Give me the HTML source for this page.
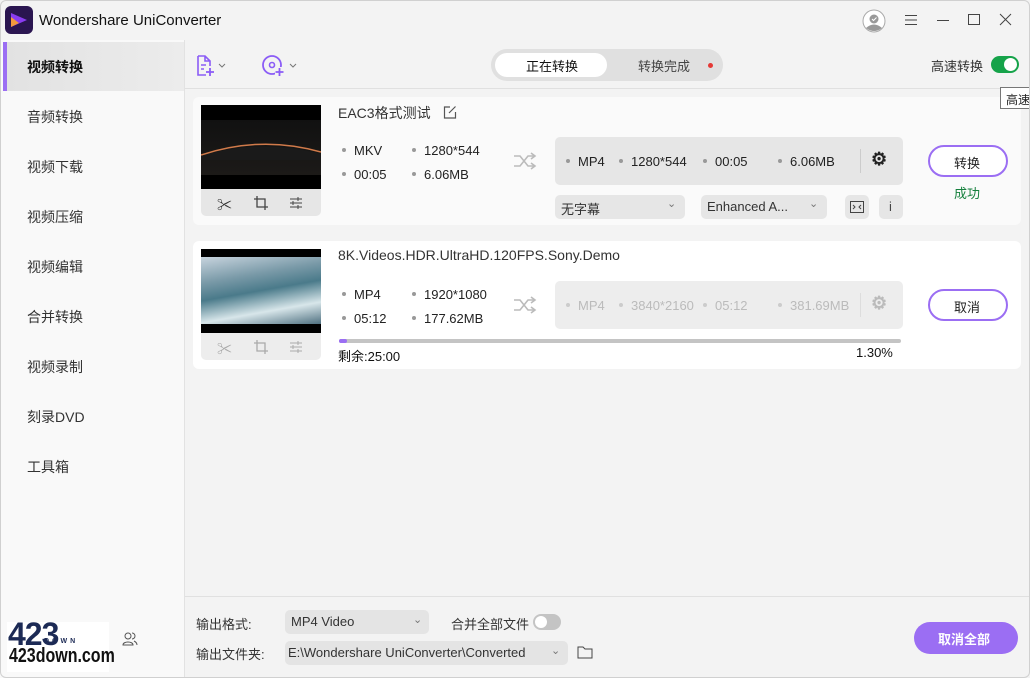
<!DOCTYPE html>
<html><head><meta charset="utf-8"><style>
*{margin:0;padding:0;box-sizing:border-box}
body{width:1030px;height:678px;overflow:hidden;background:#f3f3f3;font-family:"Liberation Sans","Noto Sans CJK SC",sans-serif;font-size:13px;color:#222;position:relative}
.a{position:absolute}
.t{position:absolute;white-space:nowrap}
.dot{display:inline-block;width:4px;height:4px;border-radius:50%;background:#999;vertical-align:middle;margin-right:8px;position:relative;top:-2px}
.side div.item{position:absolute;left:27px;font-size:14px;color:#333}
.gray{background:#e6e6e6;border-radius:5px}
</style></head><body>
<div class="a" style="left:0;top:0;width:1030px;height:678px;border:1px solid #d0d0d0;border-radius:6px;pointer-events:none;z-index:9"></div>
<div class="a" style="left:5px;top:6px;width:28px;height:28px;border-radius:6px;background:#2a1550"></div>
<svg class="a" style="left:9px;top:11px" width="20" height="18"><path d="M2 2 L18 9 L2 16Z" fill="#8a3cf0"/><path d="M2 6 L10 12 L2 16Z" fill="#f39a3c"/></svg>
<div class="t" style="left:39px;top:12px;font-size:15px;color:#111">Wondershare UniConverter</div>
<svg class="a" style="left:862px;top:9px" width="24" height="24"><circle cx="12" cy="12" r="11" fill="#fff" stroke="#aaa"/><circle cx="12" cy="10" r="4.5" fill="#999"/><path d="M4 19 Q12 12 20 19 Q12 25 4 19Z" fill="#999"/><path d="M10 10 l1.5 1.5 3-3" stroke="#fff" fill="none"/></svg>
<svg class="a" style="left:904px;top:14px" width="14" height="12"><path d="M1 1.5h12M1 6h12M1 10.5h12" stroke="#444"/></svg>
<svg class="a" style="left:936px;top:14px" width="14" height="12"><path d="M1 6.5h12" stroke="#444"/></svg>
<svg class="a" style="left:967px;top:13px" width="14" height="13"><rect x="1.5" y="1.5" width="11" height="10" fill="none" stroke="#444"/></svg>
<svg class="a" style="left:999px;top:13px" width="13" height="13"><path d="M1 1l11 11M12 1L1 12" stroke="#444"/></svg>
<div class="a side" style="left:0;top:40px;width:185px;height:638px;background:#f9f9f9;border-right:1px solid #e2e2e2">
<div class="a" style="left:3px;top:2px;width:181px;height:49px;background:linear-gradient(90deg,#e2e2e2,#ececec)"></div>
<div class="a" style="left:3px;top:2px;width:4px;height:49px;background:#9b6ef3"></div>
<div class="item" style="top:17px;font-weight:bold;color:#111">视频转换</div>
<div class="item" style="top:67px">音频转换</div>
<div class="item" style="top:117px">视频下载</div>
<div class="item" style="top:167px">视频压缩</div>
<div class="item" style="top:217px">视频编辑</div>
<div class="item" style="top:267px">合并转换</div>
<div class="item" style="top:317px">视频录制</div>
<div class="item" style="top:367px">刻录DVD</div>
<div class="item" style="top:417px">工具箱</div>
<div class="a" style="left:7px;top:582px;width:102px;height:50px;background:#fff"></div>
<div class="t" style="left:8px;top:576px;font-size:32px;font-weight:900;color:#1c2a55;letter-spacing:-1px">423</div>
<div class="t" style="left:44px;top:598px;font-size:7px;font-weight:bold;color:#1c2a55;letter-spacing:3px">DOWN</div>
<div class="t" style="left:9px;top:605px;font-size:20px;font-weight:bold;color:#111;transform:scaleX(.8);transform-origin:left">423down.com</div>
<svg class="a" style="left:122px;top:591px" width="16" height="16"><circle cx="6" cy="5" r="3" fill="none" stroke="#555"/><path d="M1 14c0-4 10-4 10 0z M10 2a3 3 0 010 6M12 10c2 1 3 2 3 4" fill="none" stroke="#555"/></svg>
</div>
<div class="a" style="left:185px;top:88px;width:845px;height:1px;background:#e0e0e0"></div>
<svg class="a" style="left:195px;top:54px" width="36" height="24"><path d="M3 2h7l5 5v5M3 2v19h8M10 2v5h5M6 11h5M6 15h3" fill="none" stroke="#8b5cf6" stroke-width="1.6"/><path d="M15 14v8M11 18h8" stroke="#8b5cf6" stroke-width="1.8"/><path d="M24 10l3 3 3-3" fill="none" stroke="#777"/></svg>
<svg class="a" style="left:260px;top:53px" width="40" height="26"><circle cx="12" cy="12" r="9" fill="none" stroke="#8b5cf6" stroke-width="1.8"/><circle cx="12" cy="12" r="2.5" fill="none" stroke="#8b5cf6" stroke-width="1.6"/><rect x="15" y="14" width="9" height="9" fill="#f3f3f3"/><path d="M19.5 15v8M15.5 19h8" stroke="#8b5cf6" stroke-width="1.8"/><path d="M30 11l3 3 3-3" fill="none" stroke="#777"/></svg>
<div class="a" style="left:491px;top:49px;width:232px;height:32px;border-radius:16px;background:#e0e0e0"></div>
<div class="a" style="left:495px;top:53px;width:112px;height:24px;border-radius:12px;background:#fff"></div>
<div class="t" style="left:526px;top:56px;color:#111">正在转换</div>
<div class="t" style="left:638px;top:56px;color:#444">转换完成</div>
<div class="a" style="left:708px;top:63px;width:5px;height:5px;border-radius:50%;background:#e53935"></div>
<div class="t" style="left:931px;top:56px;color:#333">高速转换</div>
<div class="a" style="left:991px;top:56px;width:28px;height:17px;border-radius:9px;background:#16a34a"></div>
<div class="a" style="left:1004px;top:58px;width:13px;height:13px;border-radius:50%;background:#fff"></div>
<div class="a" style="left:1000px;top:87px;width:32px;height:22px;border:1px solid #777;background:#fff;z-index:5"><span class="t" style="left:5px;top:3px;font-size:12px">高速</span></div>
<div class="a" style="left:193px;top:97px;width:828px;height:128px;background:#fafafa;border-radius:6px"></div>
<div class="a" style="left:201px;top:105px;width:120px;height:84px;background:#000"></div>
<div class="a" style="left:201px;top:120px;width:120px;height:55px;background:linear-gradient(#111,#1c1a18)"></div>
<svg class="a" style="left:201px;top:130px" width="120" height="30"><path d="M0 25 Q60 5 120 22" stroke="#d07a4a" stroke-width="1.5" fill="none"/><path d="M0 26 Q60 8 120 24 L120 30 L0 30Z" fill="#1a1a1a"/></svg>
<div class="a gray" style="left:201px;top:189px;width:120px;height:27px;border-radius:0 0 5px 5px"></div>
<div class="t" style="left:217px;top:194px;font-size:15px;color:#333">✂</div>
<svg class="a" style="left:253px;top:195px" width="16" height="16"><path d="M4 1v11h11M1 4h11v11" fill="none" stroke="#444" stroke-width="1.3"/></svg>
<svg class="a" style="left:289px;top:196px" width="14" height="14"><path d="M1 3h12M1 7h12M1 11h12M9 1v4M4 5v4M9 9v4" stroke="#444"/></svg>
<div class="t" style="left:338px;top:103px;font-size:14px;color:#333">EAC3格式测试</div>
<svg class="a" style="left:443px;top:105px" width="14" height="14"><path d="M7 2H1.5v11h11V7M6 8l6.5-6.5" fill="none" stroke="#555" stroke-width="1.2"/></svg>
<div class="t" style="left:342px;top:143px"><span class="dot"></span>MKV</div>
<div class="t" style="left:412px;top:143px"><span class="dot"></span>1280*544</div>
<div class="t" style="left:342px;top:167px"><span class="dot"></span>00:05</div>
<div class="t" style="left:412px;top:167px"><span class="dot"></span>6.06MB</div>
<svg class="a" style="left:513px;top:152px" width="24" height="18"><path d="M1 4h6l8 10h7M1 14h6l8-10h7M18 1l4 3-4 3M18 11l4 3-4 3" fill="none" stroke="#bbb" stroke-width="1.6"/></svg>
<div class="a gray" style="left:555px;top:137px;width:348px;height:48px"></div>
<div class="t" style="left:566px;top:154px"><span class="dot"></span>MP4</div>
<div class="t" style="left:619px;top:154px"><span class="dot"></span>1280*544</div>
<div class="t" style="left:703px;top:154px"><span class="dot"></span>00:05</div>
<div class="t" style="left:778px;top:154px"><span class="dot"></span>6.06MB</div>
<div class="a" style="left:860px;top:149px;width:1px;height:24px;background:#ccc"></div>
<div class="t" style="left:871px;top:149px;font-size:18px;color:#222;font-weight:bold">⚙</div>
<div class="a gray" style="left:555px;top:195px;width:130px;height:24px"></div>
<div class="t" style="left:561px;top:199px;color:#333">无字幕</div>
<div class="t" style="left:667px;top:197px;color:#777;font-size:11px">⌄</div>
<div class="a gray" style="left:701px;top:195px;width:126px;height:24px"></div>
<div class="t" style="left:707px;top:199px;color:#333">Enhanced A...</div>
<div class="t" style="left:809px;top:197px;color:#777;font-size:11px">⌄</div>
<div class="a gray" style="left:845px;top:195px;width:24px;height:24px"></div>
<svg class="a" style="left:850px;top:200px" width="14" height="14"><rect x=".5" y="1.5" width="13" height="11" fill="none" stroke="#444"/><path d="M3 5l2 2-2 2M11 5l-2 2 2 2" fill="none" stroke="#444"/></svg>
<div class="a gray" style="left:879px;top:195px;width:24px;height:24px"></div>
<div class="t" style="left:889px;top:199px;color:#444">i</div>
<div class="a" style="left:928px;top:145px;width:80px;height:32px;border:2px solid #9b6ef3;border-radius:16px;background:#fff"></div>
<div class="t" style="left:954px;top:153px;color:#222">转换</div>
<div class="t" style="left:954px;top:183px;color:#15803d">成功</div>
<div class="a" style="left:193px;top:241px;width:828px;height:128px;background:#fff;border-radius:6px"></div>
<div class="a" style="left:201px;top:249px;width:120px;height:84px;background:#000"></div>
<div class="a" style="left:201px;top:257px;width:120px;height:67px;background:linear-gradient(170deg,#c8d4de 0%,#7a9aa8 30%,#4a7a8a 50%,#d8e6ea 75%,#4f7080 100%)"></div>
<div class="a gray" style="left:201px;top:333px;width:120px;height:27px;border-radius:0 0 5px 5px;background:#ededed"></div>
<div class="t" style="left:217px;top:338px;font-size:15px;color:#aaa">✂</div>
<svg class="a" style="left:253px;top:339px" width="16" height="16"><path d="M4 1v11h11M1 4h11v11" fill="none" stroke="#aaa" stroke-width="1.3"/></svg>
<svg class="a" style="left:289px;top:340px" width="14" height="14"><path d="M1 3h12M1 7h12M1 11h12M9 1v4M4 5v4M9 9v4" stroke="#aaa"/></svg>
<div class="t" style="left:338px;top:247px;font-size:14px;color:#333">8K.Videos.HDR.UltraHD.120FPS.Sony.Demo</div>
<div class="t" style="left:342px;top:287px"><span class="dot"></span>MP4</div>
<div class="t" style="left:412px;top:287px"><span class="dot"></span>1920*1080</div>
<div class="t" style="left:342px;top:311px"><span class="dot"></span>05:12</div>
<div class="t" style="left:412px;top:311px"><span class="dot"></span>177.62MB</div>
<svg class="a" style="left:513px;top:296px" width="24" height="18"><path d="M1 4h6l8 10h7M1 14h6l8-10h7M18 1l4 3-4 3M18 11l4 3-4 3" fill="none" stroke="#bbb" stroke-width="1.6"/></svg>
<div class="a gray" style="left:555px;top:281px;width:348px;height:48px;background:#ededed"></div>
<div class="t" style="left:566px;top:298px;color:#bbb"><span class="dot" style="background:#ccc"></span>MP4</div>
<div class="t" style="left:619px;top:298px;color:#bbb"><span class="dot" style="background:#ccc"></span>3840*2160</div>
<div class="t" style="left:703px;top:298px;color:#bbb"><span class="dot" style="background:#ccc"></span>05:12</div>
<div class="t" style="left:778px;top:298px;color:#bbb"><span class="dot" style="background:#ccc"></span>381.69MB</div>
<div class="a" style="left:860px;top:293px;width:1px;height:24px;background:#ddd"></div>
<div class="t" style="left:871px;top:293px;font-size:18px;color:#bbb;font-weight:bold">⚙</div>
<div class="a" style="left:339px;top:339px;width:562px;height:4px;background:#c4c4c4;border-radius:2px"></div>
<div class="a" style="left:339px;top:339px;width:8px;height:4px;background:#9b6ef3;border-radius:2px"></div>
<div class="t" style="left:338px;top:346px;color:#111">剩余:25:00</div>
<div class="t" style="left:856px;top:345px;color:#111">1.30%</div>
<div class="a" style="left:928px;top:289px;width:80px;height:32px;border:2px solid #9b6ef3;border-radius:16px;background:#fff"></div>
<div class="t" style="left:954px;top:297px;color:#222">取消</div>
<div class="a" style="left:185px;top:596px;width:845px;height:1px;background:#e0e0e0"></div>
<div class="t" style="left:196px;top:614px;color:#333">输出格式:</div>
<div class="a gray" style="left:285px;top:610px;width:144px;height:24px;background:#e4e4e4"></div>
<div class="t" style="left:291px;top:614px;color:#333">MP4 Video</div>
<div class="t" style="left:413px;top:613px;color:#777;font-size:11px">⌄</div>
<div class="t" style="left:451px;top:614px;color:#333">合并全部文件</div>
<div class="a" style="left:533px;top:614px;width:28px;height:16px;border-radius:8px;background:#c4c4c4"></div>
<div class="a" style="left:535px;top:616px;width:12px;height:12px;border-radius:50%;background:#fff"></div>
<div class="t" style="left:196px;top:644px;color:#333">输出文件夹:</div>
<div class="a gray" style="left:285px;top:641px;width:283px;height:24px;background:#e4e4e4"></div>
<div class="t" style="left:288px;top:645px;color:#333">E:\Wondershare UniConverter\Converted</div>
<div class="t" style="left:551px;top:644px;color:#777;font-size:11px">⌄</div>
<svg class="a" style="left:577px;top:645px" width="16" height="14"><path d="M1 2h5l2 2h7v9H1z" fill="none" stroke="#444"/></svg>
<div class="a" style="left:914px;top:622px;width:104px;height:32px;border-radius:16px;background:#9b6ef3"></div>
<div class="t" style="left:938px;top:629px;color:#fff;font-weight:bold">取消全部</div>
</body></html>
